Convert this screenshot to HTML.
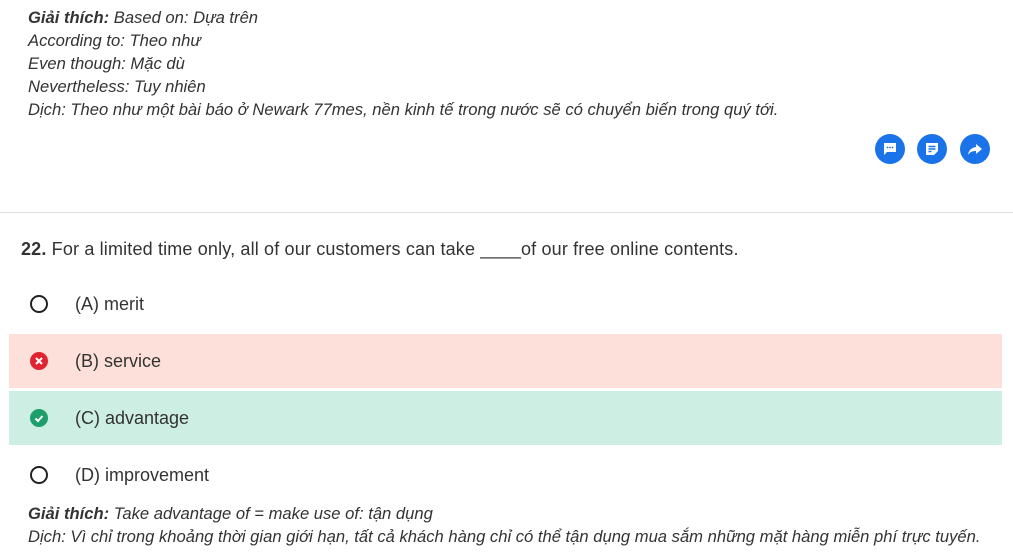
<!DOCTYPE html>
<html><head><meta charset="utf-8"><style>
body{margin:0;width:1013px;height:559px;overflow:hidden;background:#fff;font-family:"Liberation Sans",sans-serif;color:#333;position:relative}
.it{position:absolute;left:28px;font-style:italic;font-size:16.6px;color:#333;line-height:20px;white-space:nowrap}
.btn{position:absolute;top:134px;width:30px;height:30px;border-radius:50%;background:#1a73e8}
.btn svg{position:absolute;left:7px;top:7px}
.hr{position:absolute;left:0;top:212px;width:1013px;height:1px;background:#ddd}
.q{position:absolute;left:21px;top:239px;font-size:18px;letter-spacing:0.16px;color:#333;white-space:nowrap;line-height:20px}
.row{position:absolute;left:9px;width:993px;height:54px}
.opt{position:absolute;left:75px;font-size:18px;color:#333;line-height:20px}
.ic{position:absolute;left:30px;width:18px;height:18px;border-radius:50%}
</style></head><body>
<div class="it" style="top:8px"><b>Giải thích:</b> Based on: Dựa trên</div>
<div class="it" style="top:31px">According to: Theo như</div>
<div class="it" style="top:54px">Even though: Mặc dù</div>
<div class="it" style="top:77px">Nevertheless: Tuy nhiên</div>
<div class="it" style="top:100px">Dịch: Theo như một bài báo ở Newark 77mes, nền kinh tế trong nước sẽ có chuyển biến trong quý tới.</div>
<div class="btn" style="left:875px"><svg width="16" height="16" viewBox="0 0 16 16"><path d="M2 2h12v9H5l-3 3z" fill="#fff"/><circle cx="5.5" cy="6.5" r=".9" fill="#1a73e8"/><circle cx="8" cy="6.5" r=".9" fill="#1a73e8"/><circle cx="10.5" cy="6.5" r=".9" fill="#1a73e8"/></svg></div>
<div class="btn" style="left:917px"><svg width="16" height="16" viewBox="0 0 16 16"><path d="M2 2h12v8l-4 4H2z" fill="#fff"/><path d="M4.5 5.5h7M4.5 8h7M4.5 10.5h3" stroke="#1a73e8" stroke-width="1.4"/></svg></div>
<div class="btn" style="left:960px"><svg width="16" height="16" viewBox="0 0 16 16"><path d="M9 3l6 5-6 5V10C5 10 3 11 1 14 2 9 4 7 9 6z" fill="#fff"/></svg></div>
<div class="hr"></div>
<div class="q"><b>22.</b> For a limited time only, all of our customers can take ____of our free online contents.</div>
<div class="ic" style="top:295px;width:14px;height:14px;border:2px solid #222"></div>
<div class="opt" style="top:294px">(A) merit</div>
<div class="row" style="top:334px;background:#fde0da"></div>
<div class="ic" style="top:352px;background:#e02431"><svg width="18" height="18" viewBox="0 0 18 18"><path d="M6 6l6 6M12 6l-6 6" stroke="#fff" stroke-width="2"/></svg></div>
<div class="opt" style="top:351px">(B) service</div>
<div class="row" style="top:391px;background:#cdeee3"></div>
<div class="ic" style="top:409px;background:#1e9e6a"><svg width="18" height="18" viewBox="0 0 18 18"><path d="M5.5 9.5l2.5 2.5 4.5-5" stroke="#fff" stroke-width="2" fill="none"/></svg></div>
<div class="opt" style="top:408px">(C) advantage</div>
<div class="ic" style="top:466px;width:14px;height:14px;border:2px solid #222"></div>
<div class="opt" style="top:465px">(D) improvement</div>
<div class="it" style="top:504px"><b>Giải thích:</b> Take advantage of = make use of: tận dụng</div>
<div class="it" style="top:527px">Dịch: Vì chỉ trong khoảng thời gian giới hạn, tất cả khách hàng chỉ có thể tận dụng mua sắm những mặt hàng miễn phí trực tuyến.</div>
</body></html>
